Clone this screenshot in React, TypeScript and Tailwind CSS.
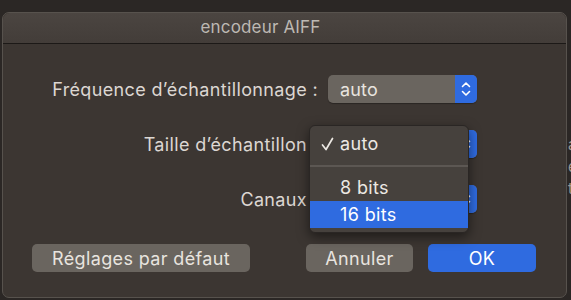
import React from "react";

const font = { fontFamily: "Inter, 'Liberation Sans', sans-serif" };

function Stepper() {
  return (
    <div className="flex h-full w-[22px] items-center justify-center rounded-r-[5px] bg-[#2f6be0]">
      <svg width="10" height="16" viewBox="0 0 10 16" fill="none" stroke="#ffffff" strokeWidth="1.6" strokeLinecap="round" strokeLinejoin="round">
        <path d="M1.5 5.5 L5 2 L8.5 5.5" />
        <path d="M1.5 10.5 L5 14 L8.5 10.5" />
      </svg>
    </div>
  );
}

function Popup({ value }: { value: string }) {
  return (
    <div className="flex h-[28px] w-[149px] items-stretch rounded-[5px] bg-[#6a655f] shadow-[0_1px_1px_rgba(0,0,0,0.3)]">
      <div className="flex flex-1 items-center pl-[12px] text-[18px] tracking-[0.01em] text-[#e8e4df]">{value}</div>
      <Stepper />
    </div>
  );
}

function Row({ label, value }: { label: string; value: string }) {
  return (
    <div className="flex items-center">
      <div className="w-[325px] pr-[10px] text-right text-[18px] tracking-[0.02em] text-[#dcd7d2]">{label}</div>
      <Popup value={value} />
    </div>
  );
}

function Menu() {
  return (
    <div className="absolute left-[306px] top-[112px] w-[160px] rounded-[6px] border border-[#2a2624] bg-[#46413d] py-[4px] text-[18px] tracking-[0.02em] text-[#ece8e3] shadow-[0_4px_12px_rgba(0,0,0,0.5)]">
      <div className="flex h-[27px] items-center">
        <span className="flex w-[30px] justify-end pr-[6px]">
          <svg width="13" height="14" viewBox="0 0 13 14" fill="none" stroke="#ece8e3" strokeWidth="1.7" strokeLinecap="round" strokeLinejoin="round">
            <path d="M1.5 8 L5 12.5 L11.5 1.5" />
          </svg>
        </span>
        <span>auto</span>
      </div>
      <div className="flex h-[17px] items-center">
        <div className="h-[2px] w-full bg-[#5c5753]" />
      </div>
      <div className="flex h-[27px] items-center pl-[30px]">8 bits</div>
      <div className="flex h-[27px] items-center bg-[#2f6be0] pl-[30px] text-white">16 bits</div>
    </div>
  );
}

export default function App() {
  return (
    <div className="flex h-[300px] w-[571px] overflow-hidden bg-[#2b2725] pl-[2px] pt-[12px]" style={font}>
      <div className="relative flex h-[286px] w-[565px] shrink-0 flex-col rounded-[7px] border border-[#57524d] bg-[#3c3632]">
        <div className="flex h-[31px] items-center justify-center rounded-t-[7px] border-b border-[#1c1917] bg-gradient-to-b from-[#4b4541] to-[#433d39] pr-[48px] text-[17px] tracking-[0.01em] text-[#bdb8b3]">
          encodeur AIFF
        </div>
        <div className="flex flex-col gap-[27px] pt-[31px]">
          <Row label="Fréquence d’échantillonnage :" value="auto" />
          <Row label="Taille d’échantillon :" value="auto" />
          <Row label="Canaux :" value="auto" />
        </div>
        <div className="flex items-center pl-[29px] pt-[31px]">
          <button className="h-[28px] w-[218px] rounded-[5px] bg-[#6a655f] text-[18px] tracking-[0.02em] text-[#e8e4df]">Réglages par défaut</button>
          <button className="ml-[56px] h-[28px] w-[107px] rounded-[5px] bg-[#6a655f] text-[18px] tracking-[0.02em] text-[#e8e4df]">Annuler</button>
          <button className="ml-[15px] h-[28px] w-[108px] rounded-[5px] bg-[#2f6be0] text-[18px] tracking-[0.02em] text-white">OK</button>
        </div>
        <Menu />
      </div>
      <div className="flex flex-col pl-[1px] pt-[122px] text-[15px] leading-[22px] text-[#9c9792]">
        <span>a</span>
        <span>e</span>
        <span>ti</span>
      </div>
    </div>
  );
}
